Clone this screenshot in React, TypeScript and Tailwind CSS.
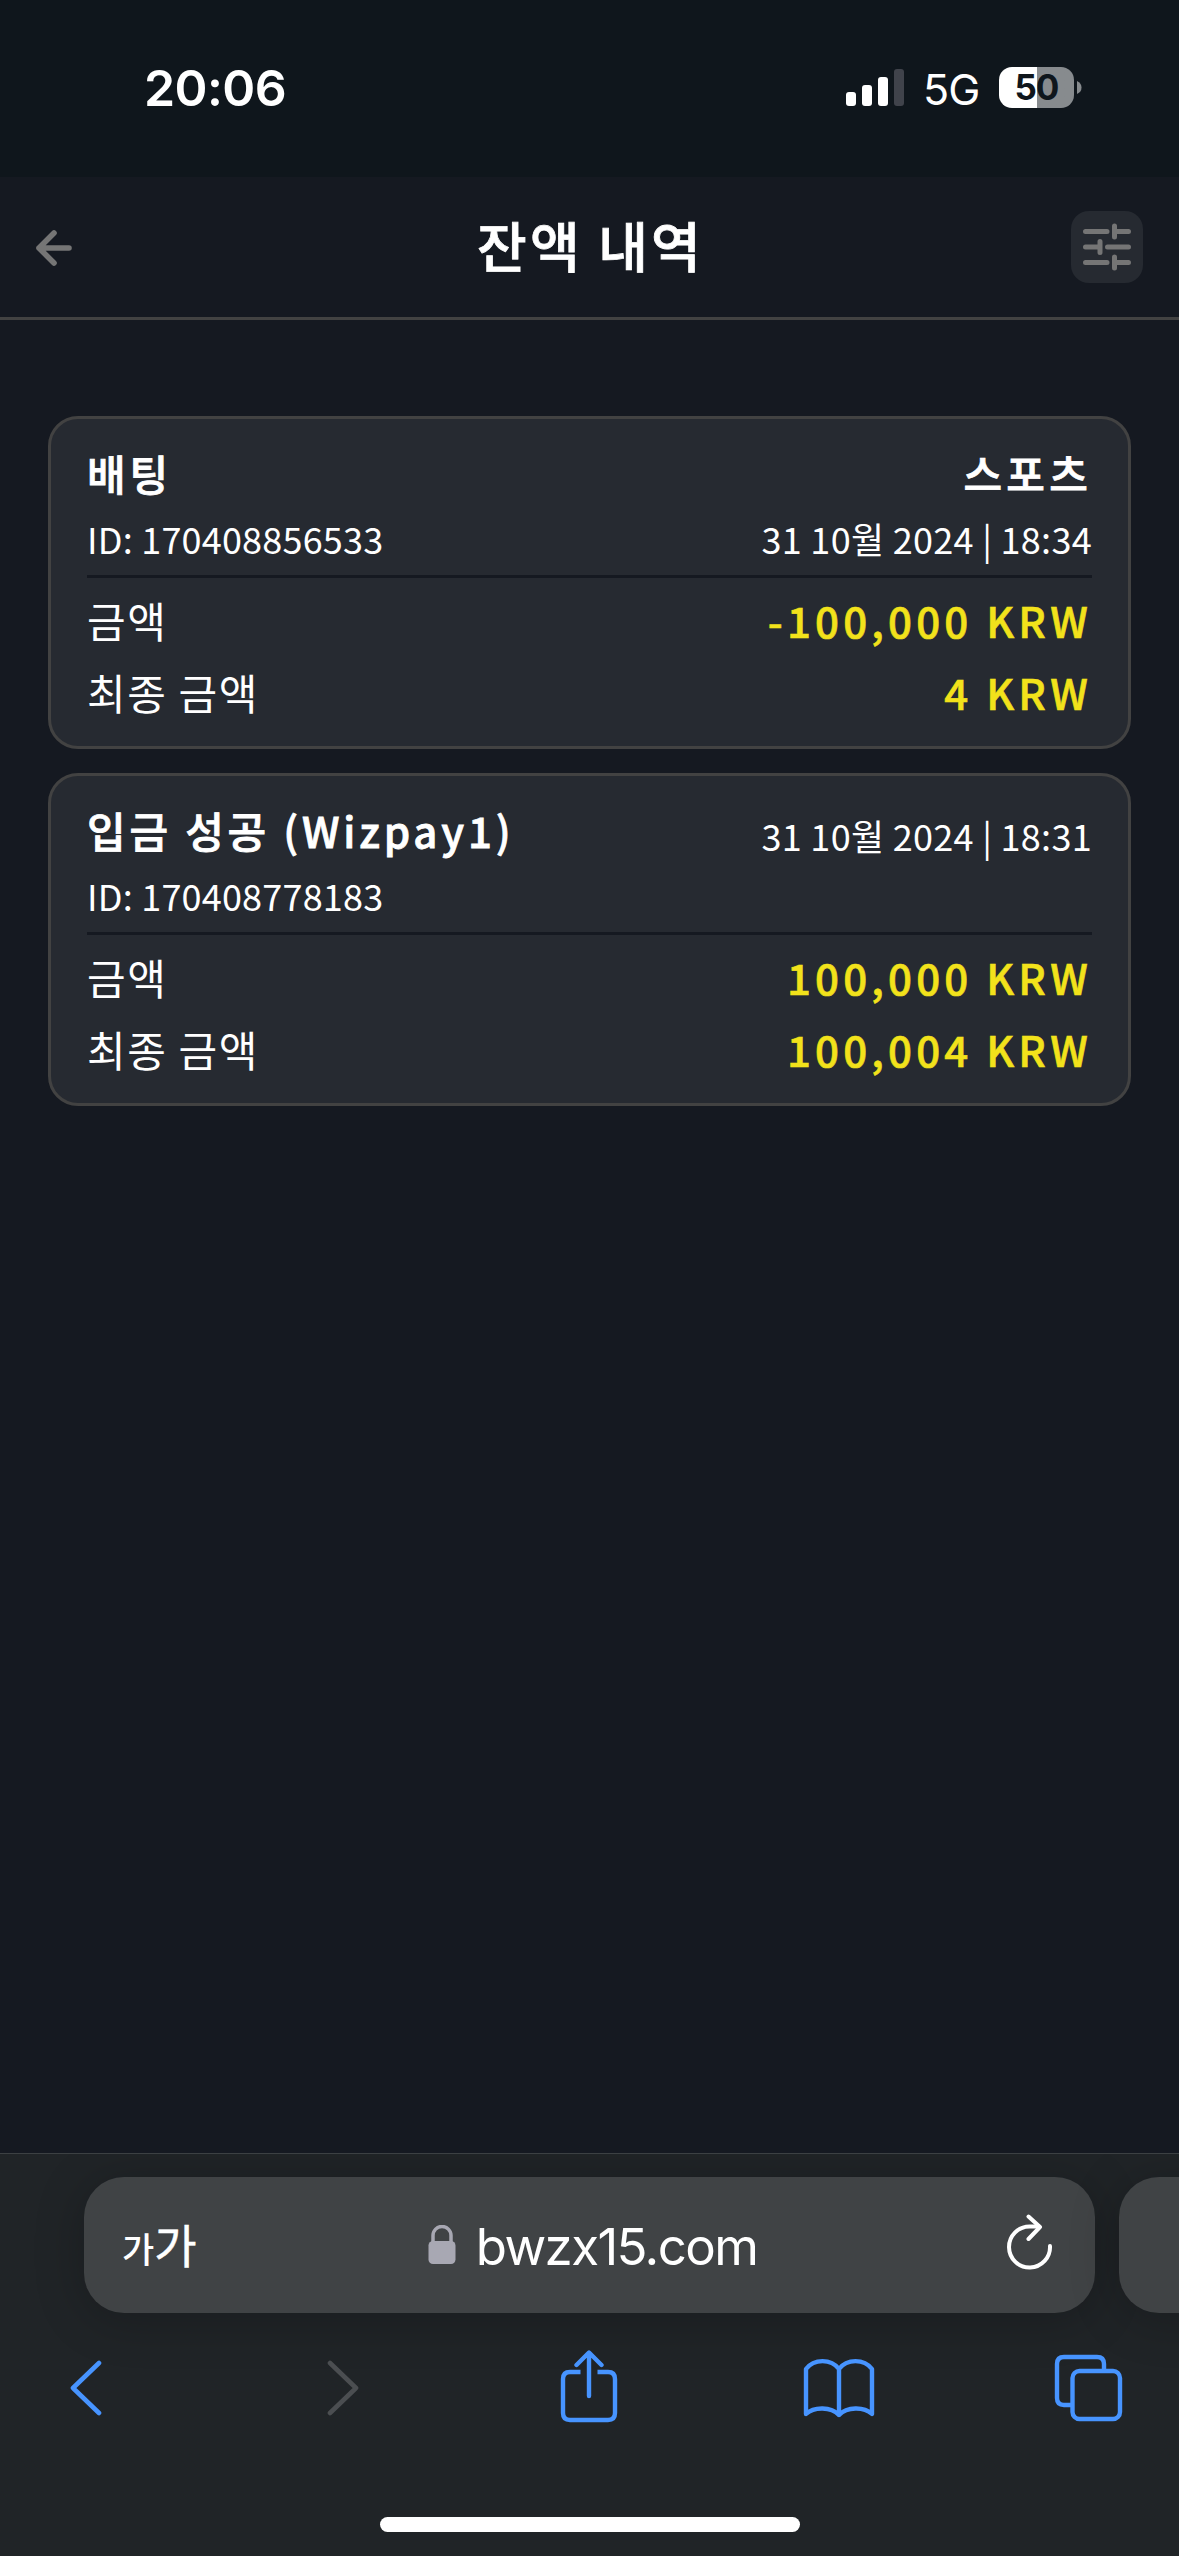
interface Transaction {
    id: string;
    title: string;
    category?: string;
    date: string;
    amount: string;
    finalAmount: string;
}

const transactions: Transaction[] = [
    {
        id: '170408856533',
        title: '배팅',
        category: '스포츠',
        date: '31 10월 2024 | 18:34',
        amount: '-100,000 KRW',
        finalAmount: '4 KRW',
    },
    {
        id: '170408778183',
        title: '입금 성공 (Wizpay1)',
        date: '31 10월 2024 | 18:31',
        amount: '100,000 KRW',
        finalAmount: '100,004 KRW',
    },
];

function StatusBar() {
    return (
        <div className="flex h-[177px] shrink-0 items-start justify-between bg-[#0f161c] pl-[144px] pr-[97px] pt-[67px] font-['Inter',sans-serif] text-white">
            <span className="text-[50px] font-semibold leading-[42px] tracking-[-0.6px]">20:06</span>
            <div className="flex h-[41px] items-center">
                <svg width="59" height="37" viewBox="0 0 59 37" className="mr-[18px]">
                    <rect x="0" y="23" width="10" height="14" rx="3" fill="#fff" />
                    <rect x="16" y="16" width="10" height="21" rx="3" fill="#fff" />
                    <rect x="32" y="8" width="10" height="29" rx="3" fill="#fff" />
                    <rect x="48" y="0" width="10" height="37" rx="3" fill="#40434b" />
                </svg>
                <span className="mr-[20px] w-[56px] pt-[3px] text-[43px] leading-[41px] tracking-[-1px]">5G</span>
                <div className="flex h-[41px] w-[75px] items-center justify-center rounded-[13px] bg-linear-to-r from-white from-51% to-[#878b8e] to-51% text-[35px] font-bold leading-[41px] tracking-[-1px] text-[#0f161c]">
                    50
                </div>
                <svg width="5" height="13" viewBox="0 0 5 13" className="ml-[3px]">
                    <path d="M0 0 Q4.5 2 4.5 6.5 T0 13 Z" fill="#878b8e" />
                </svg>
            </div>
        </div>
    );
}

function Header() {
    return (
        <header className="flex h-[143px] shrink-0 items-center justify-between border-b-[3px] border-[#424242] px-9">
            <svg width="72" height="36" viewBox="0 0 72 36" fill="none" stroke="#757575" strokeWidth="5.6" strokeLinecap="round" strokeLinejoin="round" className="mt-[2px]">
                <path d="M18 3 L3 18 L18 33 M3 18 H33" />
            </svg>
            <h1 className="mb-[5px] pl-[2px] text-[54px] font-medium leading-[72px] tracking-[3.2px] text-white [-webkit-text-stroke:0.8px]">잔액 내역</h1>
            <div className="flex size-[72px] items-center justify-center rounded-[18px] bg-[#262a31]">
                <svg width="48" height="48" viewBox="0 0 48 48" fill="none" stroke="#757575" strokeWidth="5" strokeLinecap="round">
                    <path d="M2.5 8.5 H24 M31.5 3 V14 M31.5 8.5 H45.5" />
                    <path d="M2.5 24 H17 M17 18.5 V29.5 M24.5 24 H45.5" />
                    <path d="M2.5 39.5 H24 M31.5 34 V45 M31.5 39.5 H45.5" />
                </svg>
            </div>
        </header>
    );
}

function TransactionCard({ item }: { item: Transaction }) {
    return (
        <article className="h-[333px] rounded-[30px] border-[3px] border-[#424242] bg-[#262a31] px-9 pt-[21px] text-white">
            <div className="flex h-[138px] justify-between border-b-[3px] border-[#151921]">
                <div>
                    <h2 className="text-[42px] font-medium leading-[66px] tracking-[3.8px] [-webkit-text-stroke:0.8px]">{item.title}</h2>
                    <p className="text-[36px] leading-[64px] tracking-[0.2px]">ID: {item.id}</p>
                </div>
                <div className="text-right">
                    {item.category && (
                        <p className="text-[42px] font-medium leading-[66px] tracking-[4.2px] [-webkit-text-stroke:0.8px]">{item.category}</p>
                    )}
                    <p className={item.category ? 'text-[36px] leading-[64px] tracking-[0.3px]' : 'text-[36px] leading-[76px] tracking-[0.3px]'}>
                        {item.date}
                    </p>
                </div>
            </div>
            <dl className="pt-[6px] text-[42px] leading-[72px]">
                <div className="flex justify-between">
                    <dt className="tracking-[1.6px]">금액</dt>
                    <dd className="font-medium tracking-[4.2px] text-[#f2e21b] [-webkit-text-stroke:0.6px]">{item.amount}</dd>
                </div>
                <div className="flex justify-between">
                    <dt className="tracking-[1.6px]">최종 금액</dt>
                    <dd className="font-medium tracking-[4.2px] text-[#f2e21b] [-webkit-text-stroke:0.6px]">{item.finalAmount}</dd>
                </div>
            </dl>
        </article>
    );
}

function BrowserBar() {
    return (
        <footer className="flex h-[403px] shrink-0 flex-col overflow-hidden border-t border-[#3c4043] bg-[#202427]">
            {/* Address bar and the edge of the next tab */}
            <div className="ml-[84px] mt-[23px] flex gap-6">
                <div className="flex h-[136px] w-[1011px] shrink-0 items-center justify-between rounded-[40px] bg-[#404345] pl-[38px] pr-[42px] text-white shadow-[0_6px_50px_rgba(0,0,0,0.22)]">
                    <span className="mb-[3px] flex w-[90px] items-baseline">
                        <span className="text-[35px] font-medium">가</span>
                        <span className="text-[46px] [-webkit-text-stroke:0.5px]">가</span>
                    </span>
                    <div className="flex items-center">
                        <svg width="28" height="40" viewBox="0 0 28 40" className="mr-[20px]">
                            <path d="M5 18 V10.5 A9 9 0 0 1 23 10.5 V18" fill="none" stroke="#a8a8b3" strokeWidth="3.5" />
                            <rect x="0.5" y="16" width="27" height="23" rx="4.5" fill="#a8a8b3" />
                        </svg>
                        <span className="pt-[3px] font-['Inter',sans-serif] text-[51px] leading-[60px] tracking-[-1.6px]">bwzx15.com</span>
                    </div>
                    <span className="flex w-[80px] justify-end">
                        <svg width="46" height="56" viewBox="0 0 46 56" fill="none" stroke="#fff" strokeWidth="4" strokeLinecap="round" strokeLinejoin="round" className="mb-[6px]">
                            <path d="M43 32 A20.5 20.5 0 1 1 22.5 12.5 H32" />
                            <path d="M21.5 2.5 L33 13 L21.5 25" />
                        </svg>
                    </span>
                </div>
                <div className="h-[136px] w-[200px] shrink-0 rounded-[40px] bg-[#404345] shadow-[0_6px_50px_rgba(0,0,0,0.22)]" />
            </div>

            {/* Toolbar */}
            <div className="mt-[37px] flex h-[76px] items-center pl-[69px]">
                <svg width="34" height="56" viewBox="0 0 34 56" fill="none" stroke="#4794ff" strokeWidth="4.6" strokeLinecap="round" strokeLinejoin="round">
                    <path d="M30 3 L4 28 L30 53" />
                </svg>
                <svg width="34" height="56" viewBox="0 0 34 56" fill="none" stroke="#4b4e51" strokeWidth="4.6" strokeLinecap="round" strokeLinejoin="round" className="ml-[223px]">
                    <path d="M4 3 L30 28 L4 53" />
                </svg>
                <svg width="58" height="76" viewBox="0 0 58 76" fill="none" stroke="#4794ff" strokeWidth="4.4" strokeLinecap="round" strokeLinejoin="round" className="ml-[200px]">
                    <path d="M20.5 22 H10 Q3 22 3 29 V63 Q3 70 10 70 H48 Q55 70 55 63 V29 Q55 22 48 22 H37.5" strokeLinecap="butt" />
                    <path d="M29 46 V3 M16.5 15 L29 2.5 L41.5 15" />
                </svg>
                <svg width="72" height="62" viewBox="0 0 72 62" fill="none" stroke="#4794ff" strokeWidth="4.4" strokeLinecap="round" strokeLinejoin="round" className="ml-[185px]">
                    <path d="M36 12 C28 1.5 11 1.5 3 12 V57 C11 49.5 28 49.5 36 58 C44 49.5 61 49.5 69 57 V12 C61 1.5 44 1.5 36 12 V58" />
                </svg>
                <svg width="69" height="68" viewBox="0 0 69 68" fill="none" stroke="#4794ff" strokeWidth="4.4" className="ml-[179px]">
                    <path d="M50 17 V10 Q50 3 43 3 H10 Q3 3 3 10 V44 Q3 51 10 51 H17" />
                    <rect x="18.5" y="17" width="47.5" height="48" rx="7" />
                </svg>
            </div>

            <div className="mx-auto mt-[91px] h-[15px] w-[420px] shrink-0 rounded-full bg-white" />
        </footer>
    );
}

export default function App() {
    return (
        <div className="flex h-[2556px] w-[1179px] flex-col overflow-hidden bg-[#151921] font-['Noto_Sans_CJK_KR',sans-serif]">
            <StatusBar />
            <Header />
            <main className="flex grow flex-col gap-6 px-12 pt-24">
                {transactions.map((item) => (
                    <TransactionCard key={item.id} item={item} />
                ))}
            </main>
            <BrowserBar />
        </div>
    );
}
